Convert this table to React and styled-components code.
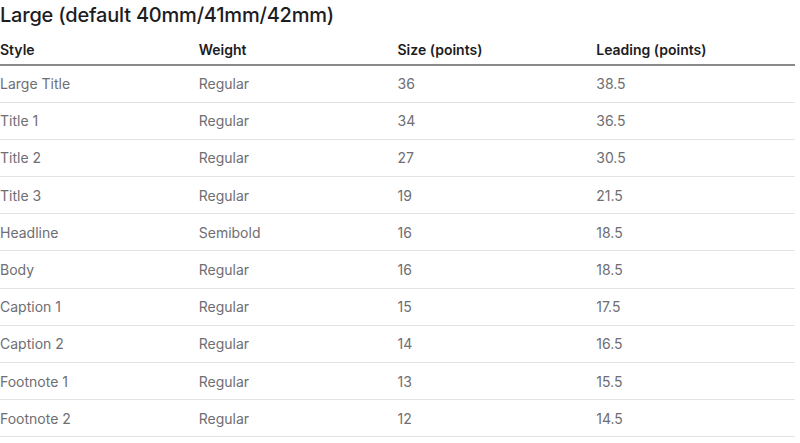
import React from "react";
import styled, { createGlobalStyle } from "styled-components";

const rows = [
  ["Large Title", "Regular", "36", "38.5"],
  ["Title 1", "Regular", "34", "36.5"],
  ["Title 2", "Regular", "27", "30.5"],
  ["Title 3", "Regular", "19", "21.5"],
  ["Headline", "Semibold", "16", "18.5"],
  ["Body", "Regular", "16", "18.5"],
  ["Caption 1", "Regular", "15", "17.5"],
  ["Caption 2", "Regular", "14", "16.5"],
  ["Footnote 1", "Regular", "13", "15.5"],
  ["Footnote 2", "Regular", "12", "14.5"],
];

const GlobalStyle = createGlobalStyle`
  body {
    margin: 0;
    background: #ffffff;
    font-family: Inter, "Noto Sans", "Liberation Sans", sans-serif;
  }
`;

const Page = styled.div`
  width: 795px;
  padding-top: 2px;
`;

const Heading = styled.h2`
  margin: 0;
  font-size: 20px;
  line-height: 26px;
  font-weight: 500;
  color: #1d1d1f;
  letter-spacing: -0.2px;
`;

const Table = styled.table`
  width: 100%;
  margin-top: 7px;
  border-collapse: collapse;
  table-layout: fixed;
`;

const HeadCell = styled.th`
  text-align: left;
  font-size: 14px;
  font-weight: 600;
  color: #1d1d1f;
  height: 30px;
  padding: 0;
  border-bottom: 2px solid #8a8a8a;
  box-sizing: border-box;
`;

const Cell = styled.td`
  font-size: 14px;
  font-weight: 400;
  color: #6e6e73;
  height: 37.2px;
  padding: 0;
  border-bottom: 1px solid #e3e3e3;
  box-sizing: border-box;
`;

export default function App() {
  return (
    <Page>
      <GlobalStyle />
      <Heading>Large (default 40mm/41mm/42mm)</Heading>
      <Table>
        <thead>
          <tr>
            <HeadCell>Style</HeadCell>
            <HeadCell>Weight</HeadCell>
            <HeadCell>Size (points)</HeadCell>
            <HeadCell>Leading (points)</HeadCell>
          </tr>
        </thead>
        <tbody>
          {rows.map((row) => (
            <tr key={row[0]}>
              {row.map((value, i) => (
                <Cell key={i}>{value}</Cell>
              ))}
            </tr>
          ))}
        </tbody>
      </Table>
    </Page>
  );
}
